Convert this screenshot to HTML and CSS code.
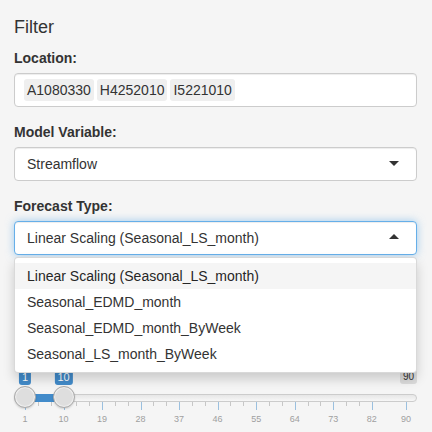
FILE: index.html
```html
<!DOCTYPE html>
<html>
<head>
<meta charset="utf-8">
<link rel="stylesheet" href="styles.css">
</head>
<body>
<div class="panel">
  <h4 class="title">Filter</h4>

  <div class="group">
    <label class="lbl">Location:</label>
    <div class="input multi">
      <span class="chip">A1080330</span><span class="chip">H4252010</span><span class="chip">I5221010</span>
    </div>
  </div>

  <div class="group">
    <label class="lbl">Model Variable:</label>
    <div class="input single"><span>Streamflow</span><i class="caret down"></i></div>
  </div>

  <div class="group">
    <label class="lbl">Forecast Type:</label>
    <div class="select-wrap">
      <div class="input single focus"><span>Linear Scaling (Seasonal_LS_month)</span><i class="caret up"></i></div>
      <div class="dropdown">
        <div class="option active">Linear Scaling (Seasonal_LS_month)</div>
        <div class="option">Seasonal_EDMD_month</div>
        <div class="option">Seasonal_EDMD_month_ByWeek</div>
        <div class="option">Seasonal_LS_month_ByWeek</div>
      </div>
    </div>
  </div>

  <div class="irs">
    <span class="irs-line"></span>
    <span class="irs-max">90</span>
    <div class="irs-track">
      <div class="irs-grid">
        <span class="pol" style="left:0%"></span>
        <span class="pol small" style="left:3.3708%"></span>
        <span class="pol small" style="left:6.7416%"></span>
        <span class="pol" style="left:10.1124%"></span>
        <span class="pol small" style="left:13.4831%"></span>
        <span class="pol small" style="left:16.8539%"></span>
        <span class="pol" style="left:20.2247%"></span>
        <span class="pol small" style="left:23.5955%"></span>
        <span class="pol small" style="left:26.9663%"></span>
        <span class="pol" style="left:30.3371%"></span>
        <span class="pol small" style="left:33.7079%"></span>
        <span class="pol small" style="left:37.0787%"></span>
        <span class="pol" style="left:40.4494%"></span>
        <span class="pol small" style="left:43.8202%"></span>
        <span class="pol small" style="left:47.191%"></span>
        <span class="pol" style="left:50.5618%"></span>
        <span class="pol small" style="left:53.9326%"></span>
        <span class="pol small" style="left:57.3034%"></span>
        <span class="pol" style="left:60.6742%"></span>
        <span class="pol small" style="left:64.0449%"></span>
        <span class="pol small" style="left:67.4157%"></span>
        <span class="pol" style="left:70.7865%"></span>
        <span class="pol small" style="left:74.1573%"></span>
        <span class="pol small" style="left:77.5281%"></span>
        <span class="pol" style="left:80.8989%"></span>
        <span class="pol small" style="left:84.2697%"></span>
        <span class="pol small" style="left:87.6404%"></span>
        <span class="pol" style="left:91.0112%"></span>
        <span class="pol" style="left:100%"></span>
        <span class="gtext" style="left:0%">1</span>
        <span class="gtext" style="left:10.1124%">10</span>
        <span class="gtext" style="left:20.2247%">19</span>
        <span class="gtext" style="left:30.3371%">28</span>
        <span class="gtext" style="left:40.4494%">37</span>
        <span class="gtext" style="left:50.5618%">46</span>
        <span class="gtext" style="left:60.6742%">55</span>
        <span class="gtext" style="left:70.7865%">64</span>
        <span class="gtext" style="left:80.8989%">73</span>
        <span class="gtext" style="left:91.0112%">82</span>
        <span class="gtext" style="left:100%">90</span>
      </div>
      <span class="irs-bar" style="left:0%;width:10.1124%"></span>
      <span class="irs-tip" style="left:0%">1</span>
      <span class="irs-tip" style="left:10.1124%">10</span>
      <span class="irs-handle" style="left:0%"></span>
      <span class="irs-handle" style="left:10.1124%"></span>
    </div>
  </div>
</div>
</body>
</html>
```

FILE: styles.css
```css
* { box-sizing: border-box; }
html, body {
  margin: 0;
  padding: 0;
  background: #f5f5f5;
}
body {
  font-family: "Liberation Sans", Arial, sans-serif;
  font-size: 14px;
  line-height: 20px;
  color: #333;
}
.panel {
  padding: 8px 15px 0 14px;
}
.title {
  margin: 10px 0 10px;
  font-size: 18px;
  font-weight: normal;
  line-height: 1.1;
}
.group {
  margin-bottom: 15px;
}
.lbl {
  display: block;
  font-weight: bold;
  margin-bottom: 5px;
}
.input {
  position: relative;
  background: #fff;
  border: 1px solid #ccc;
  border-radius: 4px;
  min-height: 34px;
  box-shadow: inset 0 1px 1px rgba(0,0,0,.075);
}
.single {
  padding: 6px 12px;
}
.multi {
  display: flex;
  flex-wrap: wrap;
  padding: 5px 9px 2px;
}
.chip {
  margin: 0 3px 3px 0;
  padding: 1px 3px;
  background: #efefef;
  border-radius: 3px;
  color: #333;
  line-height: 20px;
}
.focus {
  border-color: #66afe9;
  box-shadow: inset 0 1px 1px rgba(0,0,0,.075), 0 0 8px rgba(102,175,233,.6);
}
.caret {
  position: absolute;
  right: 17px;
  top: 50%;
  width: 0;
  height: 0;
  border-style: solid;
}
.caret.down {
  margin-top: -3px;
  border-width: 5px 5px 0 5px;
  border-color: #333 transparent transparent transparent;
}
.caret.up {
  margin-top: -4px;
  border-width: 0 5px 5px 5px;
  border-color: transparent transparent #333 transparent;
}
.select-wrap {
  position: relative;
}
.dropdown {
  position: absolute;
  top: 100%;
  left: 0;
  right: 0;
  margin-top: 2px;
  z-index: 10;
  background: #fff;
  border: 1px solid rgba(0,0,0,.15);
  border-radius: 4px;
  box-shadow: 0 6px 12px rgba(0,0,0,.175);
  padding: 5px 0;
}
.option {
  padding: 3px 12px;
  line-height: 20px;
  color: #333;
}
.option.active {
  background: #f5f5f5;
  color: #262626;
}

/* range slider */
.irs {
  position: relative;
  height: 60px;
  margin-top: 114px;
  font-family: "Liberation Sans", Arial, sans-serif;
}
.irs-line {
  position: absolute;
  top: 25px;
  left: 0;
  right: 0;
  height: 8px;
  border: 1px solid #ccc;
  border-radius: 8px;
  background: linear-gradient(to bottom, #dedede -50%, #fff 150%);
}
.irs-max {
  position: absolute;
  top: 0;
  right: 0;
  padding: 1px 3px;
  background: rgba(0,0,0,0.1);
  border-radius: 3px;
  font-size: 10px;
  line-height: 1.333;
  color: #333;
}
.irs-track {
  position: absolute;
  top: 0;
  bottom: 0;
  left: 11px;
  right: 11px;
}
.irs-bar {
  position: absolute;
  top: 25px;
  height: 8px;
  background: #428bca;
}
.irs-tip {
  position: absolute;
  top: 0;
  transform: translateX(-50%);
  padding: 1px 3px;
  background: #428bca;
  color: #fff;
  border-radius: 3px;
  font-size: 11px;
  line-height: 1.333;
}
.irs-handle {
  position: absolute;
  top: 17px;
  width: 22px;
  height: 22px;
  margin-left: -11px;
  border: 1px solid #ababab;
  background: #dedede;
  border-radius: 50%;
  box-shadow: inset 0 0 1px 1px rgba(255,255,255,.6), 0 1px 2px rgba(0,0,0,.15);
}
.irs-grid {
  position: absolute;
  top: 33px;
  left: 0;
  right: 0;
  height: 27px;
}
.pol {
  position: absolute;
  top: 0;
  width: 1px;
  height: 8px;
  background: #428bca;
  opacity: 0.5;
}
.pol.small {
  height: 4px;
  background: #999;
}
.gtext {
  position: absolute;
  top: 13px;
  transform: translateX(-50%);
  font-size: 9px;
  line-height: 9px;
  color: #a0a0a0;
  white-space: nowrap;
}
```
